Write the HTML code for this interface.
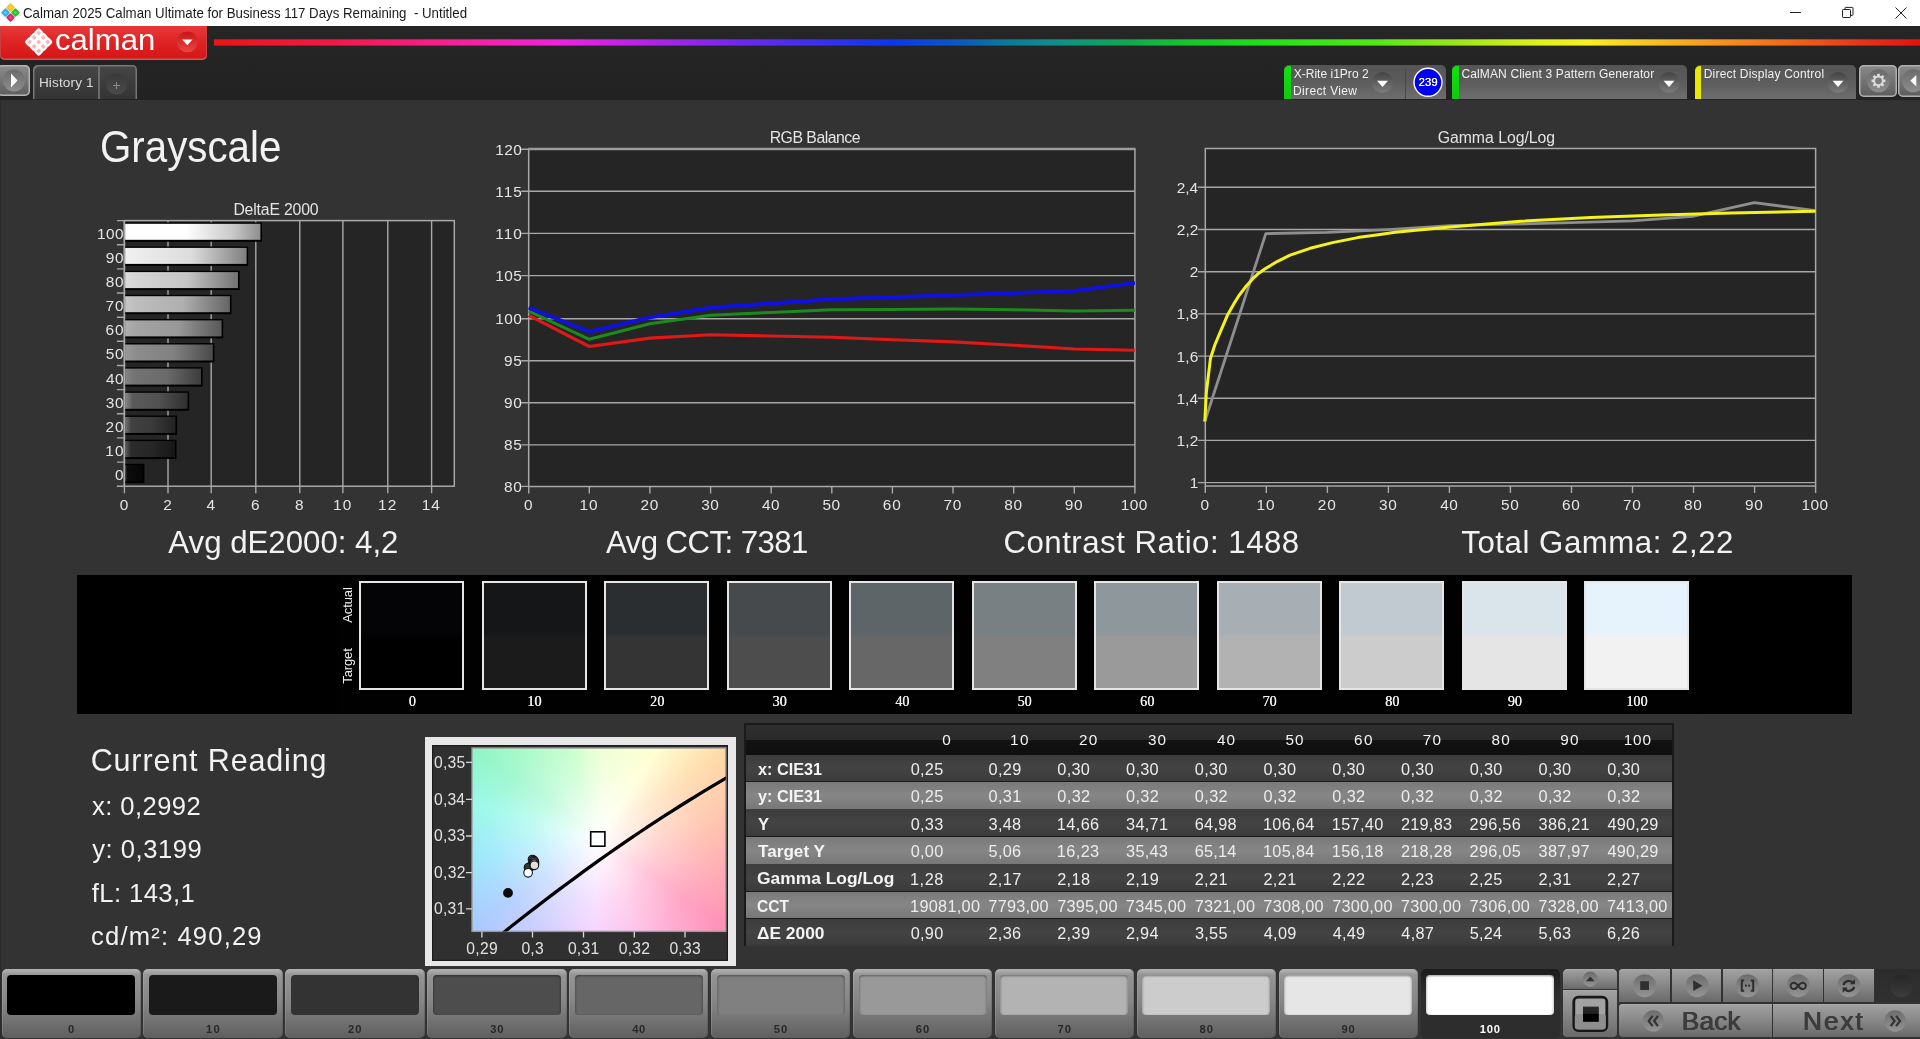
<!DOCTYPE html>
<html><head><meta charset="utf-8"><title>Calman</title>
<style>
html,body{margin:0;padding:0;}
body{width:1920px;height:1039px;overflow:hidden;background:#333;font-family:"Liberation Sans",sans-serif;position:relative;}
.t{position:absolute;white-space:pre;line-height:1;font-family:"Liberation Sans",sans-serif;}
.a{position:absolute;}
svg{position:absolute;left:0;top:0;overflow:visible;}
</style></head><body>

<div class="a" style="left:0;top:0;width:1920px;height:26px;background:#fff;"></div>
<svg width="1920" height="26" viewBox="0 0 1920 26">
<g transform="translate(10.5,12.6)">
<rect x="-3.3" y="-3.3" width="6.6" height="6.6" rx="1.1" transform="translate(0,-4.95) rotate(45)" fill="#f6c722"/>
<rect x="-3.3" y="-3.3" width="6.6" height="6.6" rx="1.1" transform="translate(-4.95,0) rotate(45)" fill="#37aee8"/>
<rect x="-3.3" y="-3.3" width="6.6" height="6.6" rx="1.1" transform="translate(4.95,0) rotate(45)" fill="#2cc42c"/>
<rect x="-3.3" y="-3.3" width="6.6" height="6.6" rx="1.1" transform="translate(0,4.95) rotate(45)" fill="#e0286a"/>
<rect x="-1.2" y="-1.2" width="2.4" height="2.4" transform="translate(0,-4.95) rotate(45)" fill="#ffd83a"/>
<rect x="-1.2" y="-1.2" width="2.4" height="2.4" transform="translate(-4.95,0) rotate(45)" fill="#5cd0f8"/>
<rect x="-1.2" y="-1.2" width="2.4" height="2.4" transform="translate(4.95,0) rotate(45)" fill="#40e840"/>
<rect x="-1.2" y="-1.2" width="2.4" height="2.4" transform="translate(0,4.95) rotate(45)" fill="#f84888"/>
</g>
<g stroke="#222" stroke-width="1" fill="none">
<path d="M1790 12.5h11"/>
<rect x="1842.5" y="9.5" width="8" height="8" rx=".7"/>
<path d="M1845 9.5v-1.5q0-.6 .6-.6h6.800q.6 0 .6 .6v6.800q0 .6-.6 .6h-1.500"/>
<path d="M1895.5 7.5l11 11M1906.5 7.5l-11 11"/>
</g></svg>
<div class="a" style="left:0;top:26px;width:1920px;height:73.5px;background:linear-gradient(#262626,#222);"></div><div class="a" style="left:0;top:99.500px;width:1px;height:940px;background:#2a2a2a;"></div>
<div class="a" style="left:0;top:26px;width:206.5px;height:33.6px;border-radius:0 0 5px 5px;background:linear-gradient(#e8393a 0%,#e02425 45%,#d41516 100%);box-shadow:inset 0 -1.5px 0 #c9585a, inset -1px 0 0 #c94042, inset 1px 0 0 #c94042;"></div>
<svg width="1920" height="60" viewBox="0 0 1920 60"><defs><linearGradient id="rbw" x1="214" x2="1920" y1="0" y2="0" gradientUnits="userSpaceOnUse"><stop offset="0.0000" stop-color="#ec1414"/><stop offset="0.0703" stop-color="#f41848"/><stop offset="0.1495" stop-color="#f820a0"/><stop offset="0.2016" stop-color="#f220e0"/><stop offset="0.2544" stop-color="#b422ea"/><stop offset="0.3066" stop-color="#7228f0"/><stop offset="0.3593" stop-color="#3430f0"/><stop offset="0.3986" stop-color="#0a38f0"/><stop offset="0.4379" stop-color="#0a5ac0"/><stop offset="0.4642" stop-color="#0a7a9a"/><stop offset="0.4959" stop-color="#109088"/><stop offset="0.5352" stop-color="#10a850"/><stop offset="0.5744" stop-color="#18c828"/><stop offset="0.6137" stop-color="#20e018"/><stop offset="0.6794" stop-color="#50e818"/><stop offset="0.7321" stop-color="#a0e818"/><stop offset="0.7714" stop-color="#d8f018"/><stop offset="0.8054" stop-color="#f8f020"/><stop offset="0.8370" stop-color="#f8c820"/><stop offset="0.8763" stop-color="#f89820"/><stop offset="0.9291" stop-color="#f06018"/><stop offset="0.9683" stop-color="#e83018"/><stop offset="1.0000" stop-color="#e81010"/></linearGradient></defs><rect x="214" y="39.3" width="1706" height="6.3" fill="url(#rbw)"/></svg>
<svg width="210" height="60" viewBox="0 0 210 60">
<g transform="translate(38.7,42) scale(1.07)" fill="rgba(255,255,255,.68)" stroke="#fff" stroke-width="1.9" stroke-linejoin="round">
<g transform="rotate(45)">
<rect x="-8.6" y="-8.6" width="5.2" height="5.2" rx="1"/><rect x="-2.6" y="-8.6" width="5.2" height="5.2" rx="1"/><rect x="3.4" y="-8.6" width="5.2" height="5.2" rx="1"/>
<rect x="-8.6" y="-2.6" width="5.2" height="5.2" rx="1"/><rect x="-2.6" y="-2.6" width="5.2" height="5.2" rx="1"/><rect x="3.4" y="-2.6" width="5.2" height="5.2" rx="1"/>
<rect x="-8.6" y="3.4" width="5.2" height="5.2" rx="1"/><rect x="-2.6" y="3.4" width="5.2" height="5.2" rx="1"/><rect x="3.4" y="3.4" width="5.2" height="5.2" rx="1"/>
</g></g>
<circle cx="187.3" cy="41.8" r="10.4" fill="url(#rb)"/>
<path d="M182.1 39.6h10.4l-5.2 5.6z" fill="#fff"/>
<defs><linearGradient id="rb" x1="0" y1="0" x2="0" y2="1"><stop offset="0" stop-color="#c81416" stop-opacity="1"/><stop offset="1" stop-color="#e84646" stop-opacity="1"/></linearGradient></defs>
</svg>
<div class="a" style="left:-3px;top:65px;width:33px;height:31px;border-radius:5px;background:linear-gradient(#8c8c8c,#5e5e5e);box-shadow:inset 0 0 0 1.5px #b4b4b4;"></div>
<svg width="40" height="100" viewBox="0 0 40 100"><circle cx="14" cy="80.5" r="11" fill="url(#pg)"/><path d="M11 73.5l6.5 7l-6.5 7z" fill="#fff"/>
<defs><linearGradient id="pg" x1="0" y1="0" x2="0" y2="1"><stop offset="0" stop-color="#6a6a6a"/><stop offset="1" stop-color="#8e8e8e"/></linearGradient></defs></svg>
<div class="a" style="left:33px;top:65px;width:104px;height:34px;border-radius:5px 5px 0 0;background:linear-gradient(#464646,#343434);box-shadow:inset 1.5px 1.5px 0 #777, inset -1.5px 0 0 #777;"></div>
<div class="a" style="left:98px;top:66px;width:1.5px;height:33px;background:#6c6c6c;"></div>
<svg width="140" height="100" viewBox="0 0 140 100"><circle cx="116.5" cy="84" r="10.5" fill="url(#hg)"/><path d="M113 85.5h7M116.5 82v7" stroke="#888" stroke-width="1" fill="none"/>
<defs><linearGradient id="hg" x1="0" y1="0" x2="0" y2="1"><stop offset="0" stop-color="#3a3a3a"/><stop offset="1" stop-color="#4a4a4a"/></linearGradient></defs></svg>
<svg width="0" height="0"><defs><linearGradient id="dg" x1="0" y1="0" x2="0" y2="1"><stop offset="0" stop-color="#444"/><stop offset="1" stop-color="#7c7c7c"/></linearGradient></defs></svg>
<div class="a" style="left:1284px;top:65px;width:161.5px;height:34px;border-radius:5px 5px 0 0;background:linear-gradient(#555 0%,#5c5c5c 50%,#6e6e6e 100%);"></div>
<div class="a" style="left:1284px;top:65.5px;width:6.9px;height:33.5px;border-radius:5px 0 0 0;background:linear-gradient(#0ee40e,#12c812);"></div>
<div class="a" style="left:1404.5px;top:69px;width:1.5px;height:30px;background:#484848;"></div>
<svg width="1920" height="100" viewBox="0 0 1920 100"><circle cx="1382.5" cy="82.5" r="10.5" fill="url(#dg)"/><path d="M1377 80.7h11l-5.5 6.200z" fill="#fff"/></svg>
<svg width="1920" height="100" viewBox="0 0 1920 100"><circle cx="1428" cy="82.3" r="14" fill="#0000f0" stroke="#fff" stroke-width="1.4"/></svg>
<div class="a" style="left:1452px;top:65px;width:235px;height:34px;border-radius:5px 5px 0 0;background:linear-gradient(#555 0%,#5c5c5c 50%,#6e6e6e 100%);"></div>
<div class="a" style="left:1452px;top:65.5px;width:6.9px;height:33.5px;border-radius:5px 0 0 0;background:linear-gradient(#0ee40e,#12c812);"></div>
<svg width="1920" height="100" viewBox="0 0 1920 100"><circle cx="1669" cy="82.5" r="10.5" fill="url(#dg)"/><path d="M1663.5 80.7h11l-5.5 6.200z" fill="#fff"/></svg>
<div class="a" style="left:1694.5px;top:65px;width:161.5px;height:34px;border-radius:5px 5px 0 0;background:linear-gradient(#555 0%,#5c5c5c 50%,#6e6e6e 100%);"></div>
<div class="a" style="left:1694.5px;top:65.5px;width:6.9px;height:33.5px;border-radius:5px 0 0 0;background:#e8e800;"></div>
<svg width="1920" height="100" viewBox="0 0 1920 100"><circle cx="1838" cy="82.5" r="10.5" fill="url(#dg)"/><path d="M1832.5 80.7h11l-5.5 6.200z" fill="#fff"/></svg>
<div class="a" style="left:1859.4px;top:65px;width:37.6px;height:31.5px;border-radius:5px;background:linear-gradient(#8a8a8a,#5c5c5c);box-shadow:inset 0 0 0 1.5px #b0b0b0;"></div>
<div class="a" style="left:1898px;top:65px;width:30px;height:31.5px;border-radius:5px;background:linear-gradient(#8a8a8a,#5c5c5c);box-shadow:inset 0 0 0 1.5px #b0b0b0;"></div>
<svg width="1920" height="100" viewBox="0 0 1920 100"><circle cx="1878.5" cy="80.8" r="11.5" fill="url(#pg)"/><path d="M1883.61 79.39L1885.50 79.60L1885.50 82.00L1883.61 82.21L1883.11 83.41L1884.30 84.90L1882.60 86.60L1881.11 85.41L1879.91 85.91L1879.70 87.80L1877.30 87.80L1877.09 85.91L1875.89 85.41L1874.40 86.60L1872.70 84.90L1873.89 83.41L1873.39 82.21L1871.50 82.00L1871.50 79.60L1873.39 79.39L1873.89 78.19L1872.70 76.70L1874.40 75.00L1875.89 76.19L1877.09 75.69L1877.30 73.80L1879.70 73.80L1879.91 75.69L1881.11 76.19L1882.60 75.00L1884.30 76.70L1883.11 78.19Z" fill="#dcdcdc"/><circle cx="1878.5" cy="80.800" r="3.400" fill="#7c7c7c"/><circle cx="1913.5" cy="80.8" r="11.5" fill="url(#pg)"/><path d="M1916.3 75l-6 5.700l6 5.700z" fill="#fff"/></svg>
<svg width="1920" height="1039" viewBox="0 0 1920 1039">
<defs>
<linearGradient id="b0"><stop offset="0" stop-color="#fff"/><stop offset=".45" stop-color="#fff"/><stop offset=".8" stop-color="#c8c8c8"/><stop offset="1" stop-color="#8e8e8e"/></linearGradient>
<linearGradient id="b1"><stop offset="0" stop-color="#f1f1f1"/><stop offset=".12" stop-color="#ececec"/><stop offset=".55" stop-color="#dcdcdc"/><stop offset="1" stop-color="#7f7f7f"/></linearGradient>
<linearGradient id="b2"><stop offset="0" stop-color="#dbdbdb"/><stop offset=".12" stop-color="#d4d4d4"/><stop offset=".55" stop-color="#c5c5c5"/><stop offset="1" stop-color="#727272"/></linearGradient>
<linearGradient id="b3"><stop offset="0" stop-color="#c6c6c6"/><stop offset=".12" stop-color="#bdbdbd"/><stop offset=".55" stop-color="#afafaf"/><stop offset="1" stop-color="#656565"/></linearGradient>
<linearGradient id="b4"><stop offset="0" stop-color="#afafaf"/><stop offset=".12" stop-color="#a4a4a4"/><stop offset=".55" stop-color="#989898"/><stop offset="1" stop-color="#585858"/></linearGradient>
<linearGradient id="b5"><stop offset="0" stop-color="#999999"/><stop offset=".12" stop-color="#8c8c8c"/><stop offset=".55" stop-color="#818181"/><stop offset="1" stop-color="#4a4a4a"/></linearGradient>
<linearGradient id="b6"><stop offset="0" stop-color="#838383"/><stop offset=".12" stop-color="#747474"/><stop offset=".55" stop-color="#6a6a6a"/><stop offset="1" stop-color="#3d3d3d"/></linearGradient>
<linearGradient id="b7"><stop offset="0" stop-color="#898989"/><stop offset=".12" stop-color="#5a5a5a"/><stop offset=".55" stop-color="#515151"/><stop offset="1" stop-color="#2f2f2f"/></linearGradient>
<linearGradient id="b8"><stop offset="0" stop-color="#737373"/><stop offset=".12" stop-color="#424242"/><stop offset=".55" stop-color="#3a3a3a"/><stop offset="1" stop-color="#222222"/></linearGradient>
<linearGradient id="b9"><stop offset="0" stop-color="#5e5e5e"/><stop offset=".12" stop-color="#2c2c2c"/><stop offset=".55" stop-color="#262626"/><stop offset="1" stop-color="#161616"/></linearGradient>
<linearGradient id="b10"><stop offset="0" stop-color="#434343"/><stop offset=".12" stop-color="#0e0e0e"/><stop offset=".55" stop-color="#090909"/><stop offset="1" stop-color="#050505"/></linearGradient>
</defs>
<rect x="124.4" y="220.6" width="329.9" height="265.6" fill="#252525"/>
<path d="M168.0 220.6V493.2M211.2 220.6V493.2M255.8 220.6V493.2M299.8 220.6V493.2M342.9 220.6V493.2M387.8 220.6V493.2M431.6 220.6V493.2M124.4 486.2V493.2M116.9 220.6H124.4M116.9 244.7H124.4M116.9 268.9H124.4M116.9 293.0H124.4M116.9 317.2H124.4M116.9 341.3H124.4M116.9 365.5H124.4M116.9 389.6H124.4M116.9 413.8H124.4M116.9 437.9H124.4M116.9 462.1H124.4M116.9 486.2H124.4" stroke="#a8a8a8" stroke-width="1.4" fill="none"/>
<rect x="124.4" y="220.6" width="329.9" height="265.6" fill="none" stroke="#a8a8a8" stroke-width="1.5"/>
<rect x="125.1" y="222.4" width="136.9" height="19.4" fill="#000"/>
<rect x="125.1" y="223.8" width="135.3" height="16" fill="url(#b0)"/>
<rect x="125.1" y="246.5" width="123.1" height="19.4" fill="#000"/>
<rect x="125.1" y="247.9" width="121.5" height="16" fill="url(#b1)"/>
<rect x="125.1" y="270.7" width="114.5" height="19.4" fill="#000"/>
<rect x="125.1" y="272.1" width="112.9" height="16" fill="url(#b2)"/>
<rect x="125.1" y="294.8" width="106.4" height="19.4" fill="#000"/>
<rect x="125.1" y="296.2" width="104.8" height="16" fill="url(#b3)"/>
<rect x="125.1" y="319.0" width="98.1" height="19.4" fill="#000"/>
<rect x="125.1" y="320.4" width="96.5" height="16" fill="url(#b4)"/>
<rect x="125.1" y="343.1" width="89.3" height="19.4" fill="#000"/>
<rect x="125.1" y="344.5" width="87.7" height="16" fill="url(#b5)"/>
<rect x="125.1" y="367.2" width="77.5" height="19.4" fill="#000"/>
<rect x="125.1" y="368.6" width="75.9" height="16" fill="url(#b6)"/>
<rect x="125.1" y="391.4" width="64.1" height="19.4" fill="#000"/>
<rect x="125.1" y="392.8" width="62.5" height="16" fill="url(#b7)"/>
<rect x="125.1" y="415.5" width="52.0" height="19.4" fill="#000"/>
<rect x="125.1" y="416.9" width="50.4" height="16" fill="url(#b8)"/>
<rect x="125.1" y="439.7" width="51.4" height="19.4" fill="#000"/>
<rect x="125.1" y="441.1" width="49.8" height="16" fill="url(#b9)"/>
<rect x="125.1" y="463.8" width="19.3" height="19.4" fill="#000"/>
<rect x="125.1" y="465.2" width="17.7" height="16" fill="url(#b10)"/>
<path d="M124.4 220.6V486.2" stroke="#a8a8a8" stroke-width="1.5" fill="none"/>
<rect x="528.7" y="149.3" width="606.2" height="337.1" fill="#252525"/>
<path d="M521.2 149.3H528.7M521.2 191.3H1134.9M521.2 233.4H1134.9M521.2 275.6H1134.9M521.2 318.7H1134.9M521.2 360.8H1134.9M521.2 402.7H1134.9M521.2 444.9H1134.9M521.2 486.4H528.7M528.7 486.4V493.4M589.3 486.4V493.4M649.9 486.4V493.4M710.6 486.4V493.4M771.2 486.4V493.4M831.8 486.4V493.4M892.4 486.4V493.4M953.0 486.4V493.4M1013.7 486.4V493.4M1074.3 486.4V493.4M1134.9 486.4V493.4" stroke="#a8a8a8" stroke-width="1.4" fill="none"/>
<path d="M528.7 149.3V486.4H1134.9V149.3" fill="none" stroke="#a8a8a8" stroke-width="1.5"/>
<path d="M528 149H1135.6" fill="none" stroke="#9c9c9c" stroke-width="2.6"/>
<polyline points="528.7,315.3 589.3,346.5 649.9,338.1 710.6,334.7 771.2,336.0 831.8,337.2 892.4,339.8 953.0,341.9 1013.7,345.2 1074.3,349.0 1134.9,350.3" fill="none" stroke="#e01818" stroke-width="3.1" stroke-linejoin="round"/>
<polyline points="528.7,311.1 589.3,339.3 649.9,323.7 710.6,315.3 771.2,312.4 831.8,309.8 892.4,309.4 953.0,309.0 1013.7,309.8 1074.3,311.1 1134.9,310.3" fill="none" stroke="#1c8a1c" stroke-width="3" stroke-linejoin="round"/>
<polyline points="528.7,307.7 589.3,331.8 649.9,317.4 710.6,307.7 771.2,303.5 831.8,299.3 892.4,297.2 953.0,295.1 1013.7,293.0 1074.3,290.9 1134.9,282.9" fill="none" stroke="#1010e0" stroke-width="3.9" stroke-linejoin="round"/>
<rect x="1205.3" y="148.5" width="610.3" height="337.5" fill="#252525"/>
<path d="M1197.8 482.6H1815.6M1197.8 440.4H1815.6M1197.8 398.2H1815.6M1197.8 356.1H1815.6M1197.8 313.9H1815.6M1197.8 271.7H1815.6M1197.8 229.5H1815.6M1197.8 187.3H1815.6M1205.3 486.0V493.0M1266.3 486.0V493.0M1327.4 486.0V493.0M1388.4 486.0V493.0M1449.4 486.0V493.0M1510.4 486.0V493.0M1571.5 486.0V493.0M1632.5 486.0V493.0M1693.5 486.0V493.0M1754.6 486.0V493.0M1815.6 486.0V493.0" stroke="#a8a8a8" stroke-width="1.4" fill="none"/>
<rect x="1205.3" y="148.5" width="610.3" height="337.5" fill="none" stroke="#a8a8a8" stroke-width="1.5"/>
<polyline points="1204.8,421.5 1265.8,233.6 1327.3,232.4 1388.3,229.6 1450.3,225.7 1510.4,224.2 1571.4,222.6 1632.4,220.8 1692.5,216.3 1754.3,202.7 1815.6,210.6" fill="none" stroke="#8e8e8e" stroke-width="2.8" stroke-linejoin="round"/>
<polyline points="1204.8,421.5 1206.3,392.7 1210.5,358.2 1215.0,344.5 1220.0,332.7 1227.5,315.1 1233.8,303.9 1239.0,295.5 1245.0,287.6 1252.6,278.9 1258.5,273.4 1265.1,268.8 1277.6,261.3 1290.1,255.1 1310.1,248.3 1332.6,242.6 1357.7,237.6 1380.0,234.4 1395.2,232.3 1450.3,226.9 1520.6,221.3 1590.9,217.6 1661.2,215.0 1731.5,212.9 1815.6,211.2" fill="none" stroke="#f4f41a" stroke-width="3" stroke-linejoin="round"/>
</svg>
<div class="a" style="left:77px;top:575px;width:1774.5px;height:139px;background:#000;"></div>
<div class="a" style="left:338px;top:575px;width:1360px;height:139px;background:#010101;"></div>
<div class="a" style="left:359.0px;top:581.2px;width:101.2px;height:105.2px;border:2px solid #e6e6e6;background:linear-gradient(#040406 0,#040406 48.5%,#000000 51.5%,#000000 100%);"></div>
<div class="a" style="left:481.5px;top:581.2px;width:101.2px;height:105.2px;border:2px solid #e6e6e6;background:linear-gradient(#151618 0,#151618 48.5%,#1b1b1b 51.5%,#1b1b1b 100%);"></div>
<div class="a" style="left:604.0px;top:581.2px;width:101.2px;height:105.2px;border:2px solid #e6e6e6;background:linear-gradient(#2b2e31 0,#2b2e31 48.5%,#343434 51.5%,#343434 100%);"></div>
<div class="a" style="left:726.5px;top:581.2px;width:101.2px;height:105.2px;border:2px solid #e6e6e6;background:linear-gradient(#464a4d 0,#464a4d 48.5%,#4d4d4d 51.5%,#4d4d4d 100%);"></div>
<div class="a" style="left:849.0px;top:581.2px;width:101.2px;height:105.2px;border:2px solid #e6e6e6;background:linear-gradient(#5e6569 0,#5e6569 48.5%,#676767 51.5%,#676767 100%);"></div>
<div class="a" style="left:971.5px;top:581.2px;width:101.2px;height:105.2px;border:2px solid #e6e6e6;background:linear-gradient(#788083 0,#788083 48.5%,#808080 51.5%,#808080 100%);"></div>
<div class="a" style="left:1094.0px;top:581.2px;width:101.2px;height:105.2px;border:2px solid #e6e6e6;background:linear-gradient(#8e979c 0,#8e979c 48.5%,#9a9a9a 51.5%,#9a9a9a 100%);"></div>
<div class="a" style="left:1216.5px;top:581.2px;width:101.2px;height:105.2px;border:2px solid #e6e6e6;background:linear-gradient(#a7afb4 0,#a7afb4 48.5%,#b2b2b2 51.5%,#b2b2b2 100%);"></div>
<div class="a" style="left:1339.0px;top:581.2px;width:101.2px;height:105.2px;border:2px solid #e6e6e6;background:linear-gradient(#c0cad0 0,#c0cad0 48.5%,#cccccc 51.5%,#cccccc 100%);"></div>
<div class="a" style="left:1461.5px;top:581.2px;width:101.2px;height:105.2px;border:2px solid #e6e6e6;background:linear-gradient(#d9e4eb 0,#d9e4eb 48.5%,#e5e5e5 51.5%,#e5e5e5 100%);"></div>
<div class="a" style="left:1584.0px;top:581.2px;width:101.2px;height:105.2px;border:2px solid #e6e6e6;background:linear-gradient(#e7f3fc 0,#e7f3fc 48.5%,#f2f2f2 51.5%,#f2f2f2 100%);"></div>
<div class="a" style="left:424.9px;top:737px;width:311.1px;height:229.1px;background:#e8e8e8;"></div>
<div class="a" style="left:432.2px;top:744.5px;width:296.3px;height:216.7px;background:#303030;box-shadow:inset 0 0 0 1.2px #1c1c1c;"></div>
<div class="a" style="left:472px;top:748px;width:253.8px;height:183.4px;overflow:hidden;background:conic-gradient(from 0deg at 125.4px 90px,#e4ffc4 0deg,#ffffc6 34deg,#ffd9a6 56deg,#ffb4a4 90deg,#ff8fb6 125deg,#ffb0e0 155deg,#f2c6ff 182deg,#c6c4ff 212deg,#a6c8ff 234deg,#8fe6fb 262deg,#8ff8e6 285deg,#8cf5c4 306deg,#b4ffba 344deg,#e4ffc4 360deg);"><div style="position:absolute;left:-80px;top:-120px;width:411px;height:420px;background:radial-gradient(circle closest-side at 205.4px 210px,rgba(255,255,255,1) 0,rgba(255,255,255,.8) 12%,rgba(255,255,255,.46) 31%,rgba(255,255,255,.18) 52%,rgba(255,255,255,0) 76%);"></div></div>
<svg width="1920" height="1039" viewBox="0 0 1920 1039">
<rect x="472" y="748" width="253.8" height="183.4" fill="none" stroke="#9a9a9a" stroke-width="1.4"/>
<path d="M466.0 762.3H472.0M466.0 799.3H472.0M466.0 836.0H472.0M466.0 872.6H472.0M466.0 908.8H472.0M481.9 931.4V937.4M532.5 931.4V937.4M583.5 931.4V937.4M634.3 931.4V937.4M685.0 931.4V937.4" stroke="#d8d8d8" stroke-width="1.3" fill="none"/>
<clipPath id="cc"><rect x="472" y="748" width="253.8" height="183.4"/></clipPath>
<polyline points="496.0,938.6 504.0,932.2 512.0,925.8 520.0,919.5 528.0,913.2 536.0,907.1 544.0,901.0 552.0,894.9 560.0,888.9 568.0,883.0 576.0,877.1 584.0,871.2 592.0,865.4 600.0,859.7 608.0,854.0 616.0,848.4 624.0,842.9 632.0,837.4 640.0,832.0 648.0,826.7 656.0,821.4 664.0,816.2 672.0,811.1 680.0,806.0 688.0,801.0 696.0,796.1 704.0,791.2 712.0,786.4 720.0,781.6 728.0,777.0" stroke="#000" stroke-width="3.3" fill="none" clip-path="url(#cc)"/>
<rect x="590.700" y="831.800" width="14.200" height="14.400" fill="#fff" stroke="#000" stroke-width="1.600"/>
<circle cx="508" cy="892.9" r="4.9" fill="#0a0a0a"/>
<circle cx="530.5" cy="866.5" r="4.3" fill="#222" stroke="#111" stroke-width="1.1"/>
<circle cx="528.5" cy="867.5" r="4.3" fill="#333" stroke="#111" stroke-width="1.1"/>
<circle cx="532.5" cy="859.5" r="4.3" fill="#555" stroke="#111" stroke-width="1.1"/>
<circle cx="533.8" cy="860.5" r="4.3" fill="#777" stroke="#111" stroke-width="1.1"/>
<circle cx="534.3" cy="861.8" r="4.3" fill="#999" stroke="#111" stroke-width="1.1"/>
<circle cx="534.5" cy="863" r="4.3" fill="#bbb" stroke="#111" stroke-width="1.1"/>
<circle cx="534.2" cy="864" r="4.3" fill="#ccc" stroke="#111" stroke-width="1.1"/>
<circle cx="534.4" cy="865.3" r="4.3" fill="#dedede" stroke="#111" stroke-width="1.1"/>
<circle cx="528.1" cy="872.8" r="4.3" fill="#fff" stroke="#111" stroke-width="1.1"/>
</svg>
<div class="a" style="left:743.5px;top:722.5px;width:930px;height:223.4px;background:#1a1a1a;"></div>
<div class="a" style="left:745.5px;top:724.5px;width:926.5px;height:30px;background:linear-gradient(#2e2e2e 0,#2a2a2a 49%,#121212 51%,#0e0e0e 100%);"></div>
<div class="a" style="left:745.5px;top:754.50px;width:926.5px;height:26.82px;background:linear-gradient(#3d3d3d,#434343 50%,#3b3b3b);"></div>
<div class="a" style="left:745.5px;top:781.92px;width:926.5px;height:26.82px;background:linear-gradient(#7a7a7a,#868686 50%,#777);"></div>
<div class="a" style="left:745.5px;top:809.34px;width:926.5px;height:26.82px;background:linear-gradient(#3d3d3d,#434343 50%,#3b3b3b);"></div>
<div class="a" style="left:745.5px;top:836.76px;width:926.5px;height:26.82px;background:linear-gradient(#7a7a7a,#868686 50%,#777);"></div>
<div class="a" style="left:745.5px;top:864.18px;width:926.5px;height:26.82px;background:linear-gradient(#3d3d3d,#434343 50%,#3b3b3b);"></div>
<div class="a" style="left:745.5px;top:891.60px;width:926.5px;height:26.82px;background:linear-gradient(#7a7a7a,#868686 50%,#777);"></div>
<div class="a" style="left:745.5px;top:919.02px;width:926.5px;height:26.90px;background:linear-gradient(#3d3d3d,#434343 50%,#3b3b3b);"></div>
<div class="a" style="left:1.5px;top:969px;width:139.4px;height:68.5px;border-radius:5px;background:linear-gradient(#b2b2b2 0,#a8a8a8 2.5px,#949494 6px,#868686 48%,#5f5f5f 100%);box-shadow:inset 1px 0 0 rgba(255,255,255,.12),inset -1px 0 0 rgba(0,0,0,.12);"></div>
<div class="a" style="left:7.1px;top:975px;width:128px;height:40px;border-radius:4px;background:#000000;"></div>
<div class="a" style="left:143.4px;top:969px;width:139.4px;height:68.5px;border-radius:5px;background:linear-gradient(#b2b2b2 0,#a8a8a8 2.5px,#949494 6px,#868686 48%,#5f5f5f 100%);box-shadow:inset 1px 0 0 rgba(255,255,255,.12),inset -1px 0 0 rgba(0,0,0,.12);"></div>
<div class="a" style="left:149.0px;top:975px;width:128px;height:40px;border-radius:4px;background:#1a1a1a;"></div>
<div class="a" style="left:285.3px;top:969px;width:139.4px;height:68.5px;border-radius:5px;background:linear-gradient(#b2b2b2 0,#a8a8a8 2.5px,#949494 6px,#868686 48%,#5f5f5f 100%);box-shadow:inset 1px 0 0 rgba(255,255,255,.12),inset -1px 0 0 rgba(0,0,0,.12);"></div>
<div class="a" style="left:290.9px;top:975px;width:128px;height:40px;border-radius:4px;background:#333333;"></div>
<div class="a" style="left:427.2px;top:969px;width:139.4px;height:68.5px;border-radius:5px;background:linear-gradient(#b2b2b2 0,#a8a8a8 2.5px,#949494 6px,#868686 48%,#5f5f5f 100%);box-shadow:inset 1px 0 0 rgba(255,255,255,.12),inset -1px 0 0 rgba(0,0,0,.12);"></div>
<div class="a" style="left:432.8px;top:975px;width:128px;height:40px;border-radius:4px;background:#4d4d4d;box-shadow:inset 0 1.5px 1.5px rgba(0,0,0,.28),inset 1.5px 0 1.5px rgba(0,0,0,.12),inset -1.5px 0 1.5px rgba(0,0,0,.12);"></div>
<div class="a" style="left:569.1px;top:969px;width:139.4px;height:68.5px;border-radius:5px;background:linear-gradient(#b2b2b2 0,#a8a8a8 2.5px,#949494 6px,#868686 48%,#5f5f5f 100%);box-shadow:inset 1px 0 0 rgba(255,255,255,.12),inset -1px 0 0 rgba(0,0,0,.12);"></div>
<div class="a" style="left:574.7px;top:975px;width:128px;height:40px;border-radius:4px;background:#666666;box-shadow:inset 0 1.5px 1.5px rgba(0,0,0,.28),inset 1.5px 0 1.5px rgba(0,0,0,.12),inset -1.5px 0 1.5px rgba(0,0,0,.12);"></div>
<div class="a" style="left:711.0px;top:969px;width:139.4px;height:68.5px;border-radius:5px;background:linear-gradient(#b2b2b2 0,#a8a8a8 2.5px,#949494 6px,#868686 48%,#5f5f5f 100%);box-shadow:inset 1px 0 0 rgba(255,255,255,.12),inset -1px 0 0 rgba(0,0,0,.12);"></div>
<div class="a" style="left:716.6px;top:975px;width:128px;height:40px;border-radius:4px;background:#808080;box-shadow:inset 0 1.5px 1.5px rgba(0,0,0,.28),inset 1.5px 0 1.5px rgba(0,0,0,.12),inset -1.5px 0 1.5px rgba(0,0,0,.12);"></div>
<div class="a" style="left:852.9px;top:969px;width:139.4px;height:68.5px;border-radius:5px;background:linear-gradient(#b2b2b2 0,#a8a8a8 2.5px,#949494 6px,#868686 48%,#5f5f5f 100%);box-shadow:inset 1px 0 0 rgba(255,255,255,.12),inset -1px 0 0 rgba(0,0,0,.12);"></div>
<div class="a" style="left:858.5px;top:975px;width:128px;height:40px;border-radius:4px;background:#999999;box-shadow:inset 0 1.5px 1.5px rgba(0,0,0,.28),inset 1.5px 0 1.5px rgba(0,0,0,.12),inset -1.5px 0 1.5px rgba(0,0,0,.12);"></div>
<div class="a" style="left:994.8px;top:969px;width:139.4px;height:68.5px;border-radius:5px;background:linear-gradient(#b2b2b2 0,#a8a8a8 2.5px,#949494 6px,#868686 48%,#5f5f5f 100%);box-shadow:inset 1px 0 0 rgba(255,255,255,.12),inset -1px 0 0 rgba(0,0,0,.12);"></div>
<div class="a" style="left:1000.4px;top:975px;width:128px;height:40px;border-radius:4px;background:#b3b3b3;box-shadow:inset 0 1.5px 1.5px rgba(0,0,0,.28),inset 1.5px 0 1.5px rgba(0,0,0,.12),inset -1.5px 0 1.5px rgba(0,0,0,.12);"></div>
<div class="a" style="left:1136.7px;top:969px;width:139.4px;height:68.5px;border-radius:5px;background:linear-gradient(#b2b2b2 0,#a8a8a8 2.5px,#949494 6px,#868686 48%,#5f5f5f 100%);box-shadow:inset 1px 0 0 rgba(255,255,255,.12),inset -1px 0 0 rgba(0,0,0,.12);"></div>
<div class="a" style="left:1142.3px;top:975px;width:128px;height:40px;border-radius:4px;background:#cccccc;box-shadow:inset 0 1.5px 1.5px rgba(0,0,0,.28),inset 1.5px 0 1.5px rgba(0,0,0,.12),inset -1.5px 0 1.5px rgba(0,0,0,.12);"></div>
<div class="a" style="left:1278.6px;top:969px;width:139.4px;height:68.5px;border-radius:5px;background:linear-gradient(#b2b2b2 0,#a8a8a8 2.5px,#949494 6px,#868686 48%,#5f5f5f 100%);box-shadow:inset 1px 0 0 rgba(255,255,255,.12),inset -1px 0 0 rgba(0,0,0,.12);"></div>
<div class="a" style="left:1284.2px;top:975px;width:128px;height:40px;border-radius:4px;background:#e6e6e6;box-shadow:inset 0 1.5px 1.5px rgba(0,0,0,.28),inset 1.5px 0 1.5px rgba(0,0,0,.12),inset -1.5px 0 1.5px rgba(0,0,0,.12);"></div>
<div class="a" style="left:1420.5px;top:969px;width:139.4px;height:69px;border-radius:5px;background:linear-gradient(#1c1c1c,#2e2e2e 40%,#2c2c2c);"></div>
<div class="a" style="left:1426.1px;top:975px;width:128px;height:40px;border-radius:4px;background:#ffffff;box-shadow:inset 0 1.5px 1.5px rgba(0,0,0,.28),inset 1.5px 0 1.5px rgba(0,0,0,.12),inset -1.5px 0 1.5px rgba(0,0,0,.12);"></div>
<div class="a" style="left:1563px;top:969px;width:54px;height:19.6px;border-radius:5px 5px 0 0;background:linear-gradient(#a2a2a2 0,#8c8c8c 42%,#6a6a6a 100%);box-shadow:inset 0 1.2px 0 #a8a8a8;"></div>
<div class="a" style="left:1563px;top:990.4px;width:54px;height:47.1px;border-radius:0 0 4px 4px;background:linear-gradient(#a2a2a2 0,#8c8c8c 42%,#6a6a6a 100%);box-shadow:inset 0 1.2px 0 #a8a8a8;"></div>
<div class="a" style="left:1619px;top:969px;width:51.4px;height:33px;border-radius:4px 0 0 0;background:linear-gradient(#a2a2a2 0,#8c8c8c 42%,#6a6a6a 100%);box-shadow:inset 0 1.2px 0 #a8a8a8;"></div>
<div class="a" style="left:1671.6px;top:969px;width:49.8px;height:33px;border-radius:0;background:linear-gradient(#a2a2a2 0,#8c8c8c 42%,#6a6a6a 100%);box-shadow:inset 0 1.2px 0 #a8a8a8;"></div>
<div class="a" style="left:1722.6px;top:969px;width:49.4px;height:33px;border-radius:0;background:linear-gradient(#a2a2a2 0,#8c8c8c 42%,#6a6a6a 100%);box-shadow:inset 0 1.2px 0 #a8a8a8;"></div>
<div class="a" style="left:1773.2px;top:969px;width:49.5px;height:33px;border-radius:0;background:linear-gradient(#a2a2a2 0,#8c8c8c 42%,#6a6a6a 100%);box-shadow:inset 0 1.2px 0 #a8a8a8;"></div>
<div class="a" style="left:1823.9px;top:969px;width:50.1px;height:33px;border-radius:0;background:linear-gradient(#a2a2a2 0,#8c8c8c 42%,#6a6a6a 100%);box-shadow:inset 0 1.2px 0 #a8a8a8;"></div>
<div class="a" style="left:1875px;top:969px;width:45px;height:33px;background:linear-gradient(#2c2c2c,#303030);"></div>
<div class="a" style="left:1619px;top:1003.8px;width:153.2px;height:33.7px;border-radius:4px 0 0 4px;background:linear-gradient(#a2a2a2 0,#8c8c8c 42%,#6a6a6a 100%);box-shadow:inset 0 1.2px 0 #a8a8a8;"></div>
<div class="a" style="left:1773.2px;top:1003.8px;width:150px;height:33.7px;border-radius:0;background:linear-gradient(#a2a2a2 0,#8c8c8c 42%,#6a6a6a 100%);box-shadow:inset 0 1.2px 0 #a8a8a8;"></div>
<svg width="1920" height="1039" viewBox="0 0 1920 1039"><defs><linearGradient id="cg" x1="0" y1="0" x2="0" y2="1"><stop offset="0" stop-color="#6c6c6c"/><stop offset="1" stop-color="#949494"/></linearGradient><linearGradient id="sq" x1="0" y1="0" x2="0" y2="1"><stop offset="0" stop-color="#2c2c2c"/><stop offset=".48" stop-color="#1c1c1c"/><stop offset=".5" stop-color="#000"/><stop offset="1" stop-color="#000"/></linearGradient><linearGradient id="cg2" x1="0" y1="0" x2="0" y2="1"><stop offset="0" stop-color="#262626"/><stop offset="1" stop-color="#3c3c3c"/></linearGradient></defs>
<circle cx="1644.6" cy="985.7" r="11.5" fill="url(#cg)"/>
<circle cx="1697.1" cy="985.7" r="11.5" fill="url(#cg)"/>
<circle cx="1747.5" cy="985.7" r="11.5" fill="url(#cg)"/>
<circle cx="1798.2" cy="985.7" r="11.5" fill="url(#cg)"/>
<circle cx="1848.8" cy="985.7" r="11.5" fill="url(#cg)"/>
<circle cx="1901.200" cy="985.900" r="11.300" fill="url(#cg2)"/>
<circle cx="1590.3" cy="979.2" r="7.6" fill="url(#cg)"/><path d="M1586 981.2h8.6l-4.3-4.6z" fill="#303030"/>
<rect x="1640.2" y="981.2" width="8.8" height="8.8" fill="#303030"/>
<path d="M1693.2 980.3v10.8l9.4-5.4z" fill="#303030"/>
<path d="M1744.2 980.6h-2.4v10.2h2.4M1750.8 980.6h2.4v10.2h-2.4" stroke="#2e2e2e" stroke-width="2" fill="none"/><circle cx="1745.900" cy="985.700" r="1.100" fill="#2e2e2e"/><circle cx="1749.100" cy="985.700" r="1.100" fill="#2e2e2e"/>
<path d="M1798.2 985.9c-1.500-2.200-2.800-3.200-4.400-3.200a3.200 3.200 0 0 0 0 6.400c1.600 0 2.900-1 4.400-3.200c1.500-2.200 2.800-3.200 4.400-3.200a3.200 3.200 0 0 1 0 6.400c-1.600 0-2.900-1-4.400-3.200z" stroke="#2e2e2e" stroke-width="2" fill="none"/>
<g transform="translate(1848.8,985.9) scale(.86) translate(-1848.8,-985.7)"><path d="M1842.6 984.6a6.4 6.4 0 0 1 10.6-3" stroke="#2e2e2e" stroke-width="2.700" fill="none"/><path d="M1855 986.8a6.4 6.4 0 0 1-10.600 3" stroke="#2e2e2e" stroke-width="2.700" fill="none"/><path d="M1856 977.800v6h-6z" fill="#2e2e2e"/><path d="M1841.600 993.600v-6h6z" fill="#2e2e2e"/></g>
<rect x="1573.8" y="997.2" width="33" height="33.4" rx="4.5" fill="#a2a2a2" stroke="#181818" stroke-width="2.800"/>
<rect x="1574.8" y="1014" width="31" height="15.6" rx="3" fill="#8e8e8e"/>
<rect x="1583" y="1006.600" width="15.800" height="15.200" fill="url(#sq)"/>
<circle cx="1653.3" cy="1021" r="10.700" fill="url(#cg)"/><circle cx="1895.1" cy="1021" r="10.700" fill="url(#cg)"/>
<path d="M1652.600 1015.800l-3.900 5.200l3.900 5.200M1658 1015.800l-3.900 5.200l3.900 5.200" stroke="#343434" stroke-width="2.200" fill="none"/>
<path d="M1890.700 1015.800l3.900 5.200l-3.900 5.200M1896.100 1015.800l3.900 5.200l-3.900 5.200" stroke="#343434" stroke-width="2.200" fill="none"/>
</svg>
<div style="position:absolute;left:0;top:0;width:1920px;height:1039px;will-change:transform;">
<div class="t" style="left:23.43px;top:5.90px;font-size:14.30px;transform:scaleX(0.9287);transform-origin:0 0;color:#1a1a1a;">Calman 2025 Calman Ultimate for Business 117 Days Remaining  - Untitled</div>
<div class="t" style="left:54.78px;top:24.61px;font-size:29.40px;transform:scaleX(1.0576);transform-origin:0 0;color:#fff;">calman</div>
<div class="t" style="left:38.88px;top:76.49px;font-size:13.60px;letter-spacing:0.140px;color:#dcdcdc;">History 1</div>
<div class="t" style="left:1418.43px;top:76.83px;font-size:11.30px;letter-spacing:0.125px;color:#fff;text-shadow:.3px 0 0 #fff;">239</div>
<div class="t" style="left:1293.73px;top:68.34px;font-size:12.00px;letter-spacing:0.013px;color:#f0f0f0;">X-Rite i1Pro 2</div>
<div class="t" style="left:1293.02px;top:84.74px;font-size:12.00px;letter-spacing:0.349px;color:#f0f0f0;">Direct View</div>
<div class="t" style="left:1461.39px;top:68.34px;font-size:12.00px;letter-spacing:0.148px;color:#f0f0f0;">CalMAN Client 3 Pattern Generator</div>
<div class="t" style="left:1703.72px;top:68.34px;font-size:12.00px;letter-spacing:0.207px;color:#f0f0f0;">Direct Display Control</div>
<div class="t" style="left:100.47px;top:124.75px;font-size:44.60px;transform:scaleX(0.9031);transform-origin:0 0;color:#f2f2f2;">Grayscale</div>
<div class="t" style="left:233.40px;top:202.23px;font-size:15.80px;letter-spacing:-0.175px;color:#e4e4e4;">DeltaE 2000</div>
<div class="t" style="left:769.70px;top:130.43px;font-size:15.80px;letter-spacing:-0.493px;color:#e4e4e4;">RGB Balance</div>
<div class="t" style="left:1437.71px;top:130.43px;font-size:15.80px;letter-spacing:-0.023px;color:#e4e4e4;">Gamma Log/Log</div>
<div class="t" style="left:96.92px;top:225.64px;font-size:15.40px;letter-spacing:0.445px;color:#e4e4e4;">100</div>
<div class="t" style="left:105.64px;top:249.78px;font-size:15.40px;letter-spacing:0.733px;color:#e4e4e4;">90</div>
<div class="t" style="left:105.69px;top:273.93px;font-size:15.40px;letter-spacing:0.681px;color:#e4e4e4;">80</div>
<div class="t" style="left:105.57px;top:298.07px;font-size:15.40px;letter-spacing:0.801px;color:#e4e4e4;">70</div>
<div class="t" style="left:105.58px;top:322.22px;font-size:15.40px;letter-spacing:0.793px;color:#e4e4e4;">60</div>
<div class="t" style="left:105.74px;top:346.36px;font-size:15.40px;letter-spacing:0.628px;color:#e4e4e4;">50</div>
<div class="t" style="left:106.01px;top:370.51px;font-size:15.40px;letter-spacing:0.365px;color:#e4e4e4;">40</div>
<div class="t" style="left:105.77px;top:394.65px;font-size:15.40px;letter-spacing:0.598px;color:#e4e4e4;">30</div>
<div class="t" style="left:105.59px;top:418.80px;font-size:15.40px;letter-spacing:0.786px;color:#e4e4e4;">20</div>
<div class="t" style="left:105.19px;top:442.95px;font-size:15.40px;letter-spacing:1.185px;color:#e4e4e4;">10</div>
<div class="t" style="left:114.94px;top:467.09px;font-size:15.40px;color:#e4e4e4;">0</div>
<div class="t" style="left:119.72px;top:496.56px;font-size:15.40px;color:#e4e4e4;">0</div>
<div class="t" style="left:163.32px;top:496.56px;font-size:15.40px;color:#e4e4e4;">2</div>
<div class="t" style="left:206.57px;top:496.56px;font-size:15.40px;color:#e4e4e4;">4</div>
<div class="t" style="left:251.06px;top:496.56px;font-size:15.40px;color:#e4e4e4;">6</div>
<div class="t" style="left:295.12px;top:496.56px;font-size:15.40px;color:#e4e4e4;">8</div>
<div class="t" style="left:333.06px;top:496.56px;font-size:15.40px;letter-spacing:1.185px;color:#e4e4e4;">10</div>
<div class="t" style="left:377.96px;top:496.56px;font-size:15.40px;letter-spacing:1.357px;color:#e4e4e4;">12</div>
<div class="t" style="left:421.76px;top:496.56px;font-size:15.40px;letter-spacing:1.034px;color:#e4e4e4;">14</div>
<div class="t" style="left:495.32px;top:141.76px;font-size:15.40px;letter-spacing:0.445px;color:#e4e4e4;">120</div>
<div class="t" style="left:495.32px;top:183.76px;font-size:15.40px;letter-spacing:1.039px;color:#e4e4e4;">115</div>
<div class="t" style="left:495.32px;top:225.86px;font-size:15.40px;letter-spacing:1.016px;color:#e4e4e4;">110</div>
<div class="t" style="left:495.32px;top:268.06px;font-size:15.40px;letter-spacing:0.467px;color:#e4e4e4;">105</div>
<div class="t" style="left:495.32px;top:311.16px;font-size:15.40px;letter-spacing:0.445px;color:#e4e4e4;">100</div>
<div class="t" style="left:504.04px;top:353.26px;font-size:15.40px;letter-spacing:0.778px;color:#e4e4e4;">95</div>
<div class="t" style="left:504.04px;top:395.16px;font-size:15.40px;letter-spacing:0.733px;color:#e4e4e4;">90</div>
<div class="t" style="left:504.09px;top:437.36px;font-size:15.40px;letter-spacing:0.726px;color:#e4e4e4;">85</div>
<div class="t" style="left:504.09px;top:478.86px;font-size:15.40px;letter-spacing:0.681px;color:#e4e4e4;">80</div>
<div class="t" style="left:523.92px;top:496.56px;font-size:15.40px;color:#e4e4e4;">0</div>
<div class="t" style="left:1200.52px;top:496.56px;font-size:15.40px;color:#e4e4e4;">0</div>
<div class="t" style="left:579.38px;top:496.56px;font-size:15.40px;letter-spacing:1.185px;color:#e4e4e4;">10</div>
<div class="t" style="left:1256.39px;top:496.56px;font-size:15.40px;letter-spacing:1.185px;color:#e4e4e4;">10</div>
<div class="t" style="left:640.40px;top:496.56px;font-size:15.40px;letter-spacing:0.786px;color:#e4e4e4;">20</div>
<div class="t" style="left:1317.82px;top:496.56px;font-size:15.40px;letter-spacing:0.786px;color:#e4e4e4;">20</div>
<div class="t" style="left:701.20px;top:496.56px;font-size:15.40px;letter-spacing:0.598px;color:#e4e4e4;">30</div>
<div class="t" style="left:1379.03px;top:496.56px;font-size:15.40px;letter-spacing:0.598px;color:#e4e4e4;">30</div>
<div class="t" style="left:762.06px;top:496.56px;font-size:15.40px;letter-spacing:0.365px;color:#e4e4e4;">40</div>
<div class="t" style="left:1440.30px;top:496.56px;font-size:15.40px;letter-spacing:0.365px;color:#e4e4e4;">40</div>
<div class="t" style="left:822.41px;top:496.56px;font-size:15.40px;letter-spacing:0.628px;color:#e4e4e4;">50</div>
<div class="t" style="left:1501.06px;top:496.56px;font-size:15.40px;letter-spacing:0.628px;color:#e4e4e4;">50</div>
<div class="t" style="left:882.87px;top:496.56px;font-size:15.40px;letter-spacing:0.793px;color:#e4e4e4;">60</div>
<div class="t" style="left:1561.93px;top:496.56px;font-size:15.40px;letter-spacing:0.793px;color:#e4e4e4;">60</div>
<div class="t" style="left:943.48px;top:496.56px;font-size:15.40px;letter-spacing:0.801px;color:#e4e4e4;">70</div>
<div class="t" style="left:1622.95px;top:496.56px;font-size:15.40px;letter-spacing:0.801px;color:#e4e4e4;">70</div>
<div class="t" style="left:1004.22px;top:496.56px;font-size:15.40px;letter-spacing:0.681px;color:#e4e4e4;">80</div>
<div class="t" style="left:1684.10px;top:496.56px;font-size:15.40px;letter-spacing:0.681px;color:#e4e4e4;">80</div>
<div class="t" style="left:1064.79px;top:496.56px;font-size:15.40px;letter-spacing:0.733px;color:#e4e4e4;">90</div>
<div class="t" style="left:1745.08px;top:496.56px;font-size:15.40px;letter-spacing:0.733px;color:#e4e4e4;">90</div>
<div class="t" style="left:1120.82px;top:496.56px;font-size:15.40px;letter-spacing:0.445px;color:#e4e4e4;">100</div>
<div class="t" style="left:1801.52px;top:496.56px;font-size:15.40px;letter-spacing:0.445px;color:#e4e4e4;">100</div>
<div class="t" style="left:1189.79px;top:475.06px;font-size:15.40px;color:#e4e4e4;">1</div>
<div class="t" style="left:1176.43px;top:432.88px;font-size:15.40px;letter-spacing:0.269px;color:#e4e4e4;">1,2</div>
<div class="t" style="left:1176.43px;top:390.70px;font-size:15.40px;letter-spacing:0.108px;color:#e4e4e4;">1,4</div>
<div class="t" style="left:1176.43px;top:348.52px;font-size:15.40px;letter-spacing:0.220px;color:#e4e4e4;">1,6</div>
<div class="t" style="left:1176.43px;top:306.34px;font-size:15.40px;letter-spacing:0.217px;color:#e4e4e4;">1,8</div>
<div class="t" style="left:1189.81px;top:264.16px;font-size:15.40px;color:#e4e4e4;">2</div>
<div class="t" style="left:1176.83px;top:221.98px;font-size:15.40px;letter-spacing:0.070px;color:#e4e4e4;">2,2</div>
<div class="t" style="left:1176.83px;top:179.80px;font-size:15.40px;letter-spacing:-0.092px;color:#e4e4e4;">2,4</div>
<div class="t" style="left:168.34px;top:527.19px;font-size:31.20px;letter-spacing:0.005px;color:#f2f2f2;">Avg dE2000: 4,2</div>
<div class="t" style="left:605.94px;top:527.19px;font-size:31.20px;letter-spacing:-0.558px;color:#f2f2f2;">Avg CCT: 7381</div>
<div class="t" style="left:1003.42px;top:527.19px;font-size:31.20px;letter-spacing:0.514px;color:#f2f2f2;">Contrast Ratio: 1488</div>
<div class="t" style="left:1461.30px;top:527.19px;font-size:31.20px;letter-spacing:0.542px;color:#f2f2f2;">Total Gamma: 2,22</div>
<div class="t" style="left:408.65px;top:693.91px;font-size:14.20px;font-family:'Liberation Serif',serif;color:#f0f0f0;text-shadow:.3px 0 0 #f0f0f0;">0</div>
<div class="t" style="left:527.25px;top:693.91px;font-size:14.20px;font-family:'Liberation Serif',serif;color:#f0f0f0;text-shadow:.3px 0 0 #f0f0f0;">10</div>
<div class="t" style="left:650.06px;top:693.91px;font-size:14.20px;font-family:'Liberation Serif',serif;color:#f0f0f0;text-shadow:.3px 0 0 #f0f0f0;">20</div>
<div class="t" style="left:772.53px;top:693.91px;font-size:14.20px;font-family:'Liberation Serif',serif;color:#f0f0f0;text-shadow:.3px 0 0 #f0f0f0;">30</div>
<div class="t" style="left:895.23px;top:693.91px;font-size:14.20px;font-family:'Liberation Serif',serif;color:#f0f0f0;text-shadow:.3px 0 0 #f0f0f0;">40</div>
<div class="t" style="left:1017.46px;top:693.91px;font-size:14.20px;font-family:'Liberation Serif',serif;color:#f0f0f0;text-shadow:.3px 0 0 #f0f0f0;">50</div>
<div class="t" style="left:1140.07px;top:693.91px;font-size:14.20px;font-family:'Liberation Serif',serif;color:#f0f0f0;text-shadow:.3px 0 0 #f0f0f0;">60</div>
<div class="t" style="left:1262.40px;top:693.91px;font-size:14.20px;font-family:'Liberation Serif',serif;color:#f0f0f0;text-shadow:.3px 0 0 #f0f0f0;">70</div>
<div class="t" style="left:1385.10px;top:693.91px;font-size:14.20px;font-family:'Liberation Serif',serif;color:#f0f0f0;text-shadow:.3px 0 0 #f0f0f0;">80</div>
<div class="t" style="left:1507.64px;top:693.91px;font-size:14.20px;font-family:'Liberation Serif',serif;color:#f0f0f0;text-shadow:.3px 0 0 #f0f0f0;">90</div>
<div class="t" style="left:1626.20px;top:693.91px;font-size:14.20px;font-family:'Liberation Serif',serif;color:#f0f0f0;text-shadow:.3px 0 0 #f0f0f0;">100</div>
<div class="t" style="left:336px;top:598px;width:22px;height:14px;font-size:13px;color:#f0f0f0;transform:rotate(-90deg);transform-origin:center;text-align:center;letter-spacing:-.1px;"><span style="position:absolute;left:50%;top:50%;transform:translate(-50%,-50%);">Actual</span></div>
<div class="t" style="left:336px;top:659px;width:22px;height:14px;font-size:13px;color:#f0f0f0;transform:rotate(-90deg);transform-origin:center;text-align:center;letter-spacing:-.1px;"><span style="position:absolute;left:50%;top:50%;transform:translate(-50%,-50%);">Target</span></div>
<div class="t" style="left:90.65px;top:744.58px;font-size:30.50px;letter-spacing:0.865px;color:#f2f2f2;">Current Reading</div>
<div class="t" style="left:91.91px;top:794.13px;font-size:25.60px;letter-spacing:0.443px;color:#f2f2f2;">x: 0,2992</div>
<div class="t" style="left:92.14px;top:837.33px;font-size:25.60px;letter-spacing:0.543px;color:#f2f2f2;">y: 0,3199</div>
<div class="t" style="left:91.84px;top:880.73px;font-size:25.60px;letter-spacing:0.409px;color:#f2f2f2;">fL: 143,1</div>
<div class="t" style="left:91.11px;top:923.93px;font-size:25.60px;letter-spacing:1.164px;color:#f2f2f2;">cd/m²: 490,29</div>
<div class="t" style="left:433.99px;top:754.61px;font-size:15.70px;letter-spacing:0.238px;color:#e0e0e0;">0,35</div>
<div class="t" style="left:433.99px;top:791.61px;font-size:15.70px;letter-spacing:0.172px;color:#e0e0e0;">0,34</div>
<div class="t" style="left:433.99px;top:828.31px;font-size:15.70px;letter-spacing:0.248px;color:#e0e0e0;">0,33</div>
<div class="t" style="left:433.99px;top:864.91px;font-size:15.70px;letter-spacing:0.282px;color:#e0e0e0;">0,32</div>
<div class="t" style="left:433.99px;top:901.11px;font-size:15.70px;letter-spacing:0.274px;color:#e0e0e0;">0,31</div>
<div class="t" style="left:466.29px;top:941.31px;font-size:15.70px;letter-spacing:0.266px;color:#e0e0e0;">0,29</div>
<div class="t" style="left:521.39px;top:941.31px;font-size:15.70px;letter-spacing:0.239px;color:#e0e0e0;">0,3</div>
<div class="t" style="left:567.89px;top:941.31px;font-size:15.70px;letter-spacing:0.274px;color:#e0e0e0;">0,31</div>
<div class="t" style="left:618.69px;top:941.31px;font-size:15.70px;letter-spacing:0.282px;color:#e0e0e0;">0,32</div>
<div class="t" style="left:669.39px;top:941.31px;font-size:15.70px;letter-spacing:0.248px;color:#e0e0e0;">0,33</div>
<div class="t" style="left:757.89px;top:760.73px;font-size:16.50px;transform:scaleX(0.9838);transform-origin:0 0;font-weight:bold;color:#f4f4f4;">x: CIE31</div>
<div class="t" style="left:910.66px;top:760.90px;font-size:16.30px;letter-spacing:0.298px;color:#ececec;">0,25</div>
<div class="t" style="left:988.56px;top:760.90px;font-size:16.30px;letter-spacing:0.328px;color:#ececec;">0,29</div>
<div class="t" style="left:1057.36px;top:760.90px;font-size:16.30px;letter-spacing:0.283px;color:#ececec;">0,30</div>
<div class="t" style="left:1126.06px;top:760.90px;font-size:16.30px;letter-spacing:0.283px;color:#ececec;">0,30</div>
<div class="t" style="left:1194.86px;top:760.90px;font-size:16.30px;letter-spacing:0.283px;color:#ececec;">0,30</div>
<div class="t" style="left:1263.56px;top:760.90px;font-size:16.30px;letter-spacing:0.283px;color:#ececec;">0,30</div>
<div class="t" style="left:1332.36px;top:760.90px;font-size:16.30px;letter-spacing:0.283px;color:#ececec;">0,30</div>
<div class="t" style="left:1401.06px;top:760.90px;font-size:16.30px;letter-spacing:0.283px;color:#ececec;">0,30</div>
<div class="t" style="left:1469.76px;top:760.90px;font-size:16.30px;letter-spacing:0.283px;color:#ececec;">0,30</div>
<div class="t" style="left:1538.56px;top:760.90px;font-size:16.30px;letter-spacing:0.283px;color:#ececec;">0,30</div>
<div class="t" style="left:1607.26px;top:760.90px;font-size:16.30px;letter-spacing:0.283px;color:#ececec;">0,30</div>
<div class="t" style="left:757.87px;top:788.15px;font-size:16.50px;transform:scaleX(0.9841);transform-origin:0 0;font-weight:bold;color:#f4f4f4;">y: CIE31</div>
<div class="t" style="left:910.66px;top:788.32px;font-size:16.30px;letter-spacing:0.298px;color:#ececec;">0,25</div>
<div class="t" style="left:988.56px;top:788.32px;font-size:16.30px;letter-spacing:0.336px;color:#ececec;">0,31</div>
<div class="t" style="left:1057.36px;top:788.32px;font-size:16.30px;letter-spacing:0.344px;color:#ececec;">0,32</div>
<div class="t" style="left:1126.06px;top:788.32px;font-size:16.30px;letter-spacing:0.344px;color:#ececec;">0,32</div>
<div class="t" style="left:1194.86px;top:788.32px;font-size:16.30px;letter-spacing:0.344px;color:#ececec;">0,32</div>
<div class="t" style="left:1263.56px;top:788.32px;font-size:16.30px;letter-spacing:0.344px;color:#ececec;">0,32</div>
<div class="t" style="left:1332.36px;top:788.32px;font-size:16.30px;letter-spacing:0.344px;color:#ececec;">0,32</div>
<div class="t" style="left:1401.06px;top:788.32px;font-size:16.30px;letter-spacing:0.344px;color:#ececec;">0,32</div>
<div class="t" style="left:1469.76px;top:788.32px;font-size:16.30px;letter-spacing:0.344px;color:#ececec;">0,32</div>
<div class="t" style="left:1538.56px;top:788.32px;font-size:16.30px;letter-spacing:0.344px;color:#ececec;">0,32</div>
<div class="t" style="left:1607.26px;top:788.32px;font-size:16.30px;letter-spacing:0.344px;color:#ececec;">0,32</div>
<div class="t" style="left:757.72px;top:815.57px;font-size:16.50px;transform:scaleX(1.0041);transform-origin:0 0;font-weight:bold;color:#f4f4f4;">Y</div>
<div class="t" style="left:910.66px;top:815.74px;font-size:16.30px;letter-spacing:0.309px;color:#ececec;">0,33</div>
<div class="t" style="left:988.58px;top:815.74px;font-size:16.30px;letter-spacing:0.301px;color:#ececec;">3,48</div>
<div class="t" style="left:1056.76px;top:815.74px;font-size:16.30px;letter-spacing:0.417px;color:#ececec;">14,66</div>
<div class="t" style="left:1126.08px;top:815.74px;font-size:16.30px;letter-spacing:0.281px;color:#ececec;">34,71</div>
<div class="t" style="left:1194.67px;top:815.74px;font-size:16.30px;letter-spacing:0.311px;color:#ececec;">64,98</div>
<div class="t" style="left:1262.96px;top:815.74px;font-size:16.30px;letter-spacing:0.312px;color:#ececec;">106,64</div>
<div class="t" style="left:1331.76px;top:815.74px;font-size:16.30px;letter-spacing:0.344px;color:#ececec;">157,40</div>
<div class="t" style="left:1400.88px;top:815.74px;font-size:16.30px;letter-spacing:0.276px;color:#ececec;">219,83</div>
<div class="t" style="left:1469.58px;top:815.74px;font-size:16.30px;letter-spacing:0.276px;color:#ececec;">296,56</div>
<div class="t" style="left:1538.58px;top:815.74px;font-size:16.30px;letter-spacing:0.252px;color:#ececec;">386,21</div>
<div class="t" style="left:1607.53px;top:815.74px;font-size:16.30px;letter-spacing:0.198px;color:#ececec;">490,29</div>
<div class="t" style="left:757.81px;top:842.99px;font-size:16.50px;transform:scaleX(1.0383);transform-origin:0 0;font-weight:bold;color:#f4f4f4;">Target Y</div>
<div class="t" style="left:910.66px;top:843.16px;font-size:16.30px;letter-spacing:0.283px;color:#ececec;">0,00</div>
<div class="t" style="left:988.55px;top:843.16px;font-size:16.30px;letter-spacing:0.314px;color:#ececec;">5,06</div>
<div class="t" style="left:1056.76px;top:843.16px;font-size:16.30px;letter-spacing:0.417px;color:#ececec;">16,23</div>
<div class="t" style="left:1126.08px;top:843.16px;font-size:16.30px;letter-spacing:0.261px;color:#ececec;">35,43</div>
<div class="t" style="left:1194.67px;top:843.16px;font-size:16.30px;letter-spacing:0.253px;color:#ececec;">65,14</div>
<div class="t" style="left:1262.96px;top:843.16px;font-size:16.30px;letter-spacing:0.312px;color:#ececec;">105,84</div>
<div class="t" style="left:1331.76px;top:843.16px;font-size:16.30px;letter-spacing:0.359px;color:#ececec;">156,18</div>
<div class="t" style="left:1400.88px;top:843.16px;font-size:16.30px;letter-spacing:0.274px;color:#ececec;">218,28</div>
<div class="t" style="left:1469.58px;top:843.16px;font-size:16.30px;letter-spacing:0.269px;color:#ececec;">296,05</div>
<div class="t" style="left:1538.58px;top:843.16px;font-size:16.30px;letter-spacing:0.257px;color:#ececec;">387,97</div>
<div class="t" style="left:1607.53px;top:843.16px;font-size:16.30px;letter-spacing:0.198px;color:#ececec;">490,29</div>
<div class="t" style="left:757.29px;top:870.41px;font-size:16.50px;transform:scaleX(1.0546);transform-origin:0 0;font-weight:bold;color:#f4f4f4;">Gamma Log/Log</div>
<div class="t" style="left:910.06px;top:870.58px;font-size:16.30px;letter-spacing:0.508px;color:#ececec;">1,28</div>
<div class="t" style="left:988.38px;top:870.58px;font-size:16.30px;letter-spacing:0.405px;color:#ececec;">2,17</div>
<div class="t" style="left:1057.18px;top:870.58px;font-size:16.30px;letter-spacing:0.367px;color:#ececec;">2,18</div>
<div class="t" style="left:1125.88px;top:870.58px;font-size:16.30px;letter-spacing:0.389px;color:#ececec;">2,19</div>
<div class="t" style="left:1194.68px;top:870.58px;font-size:16.30px;letter-spacing:0.397px;color:#ececec;">2,21</div>
<div class="t" style="left:1263.38px;top:870.58px;font-size:16.30px;letter-spacing:0.397px;color:#ececec;">2,21</div>
<div class="t" style="left:1332.18px;top:870.58px;font-size:16.30px;letter-spacing:0.405px;color:#ececec;">2,22</div>
<div class="t" style="left:1400.88px;top:870.58px;font-size:16.30px;letter-spacing:0.370px;color:#ececec;">2,23</div>
<div class="t" style="left:1469.58px;top:870.58px;font-size:16.30px;letter-spacing:0.359px;color:#ececec;">2,25</div>
<div class="t" style="left:1538.38px;top:870.58px;font-size:16.30px;letter-spacing:0.397px;color:#ececec;">2,31</div>
<div class="t" style="left:1607.08px;top:870.58px;font-size:16.30px;letter-spacing:0.405px;color:#ececec;">2,27</div>
<div class="t" style="left:757.36px;top:897.83px;font-size:16.50px;transform:scaleX(0.9408);transform-origin:0 0;font-weight:bold;color:#f4f4f4;">CCT</div>
<div class="t" style="left:910.06px;top:898.00px;font-size:16.30px;letter-spacing:0.284px;color:#ececec;">19081,00</div>
<div class="t" style="left:988.36px;top:898.00px;font-size:16.30px;letter-spacing:0.242px;color:#ececec;">7793,00</div>
<div class="t" style="left:1057.16px;top:898.00px;font-size:16.30px;letter-spacing:0.242px;color:#ececec;">7395,00</div>
<div class="t" style="left:1125.86px;top:898.00px;font-size:16.30px;letter-spacing:0.242px;color:#ececec;">7345,00</div>
<div class="t" style="left:1194.66px;top:898.00px;font-size:16.30px;letter-spacing:0.242px;color:#ececec;">7321,00</div>
<div class="t" style="left:1263.36px;top:898.00px;font-size:16.30px;letter-spacing:0.242px;color:#ececec;">7308,00</div>
<div class="t" style="left:1332.16px;top:898.00px;font-size:16.30px;letter-spacing:0.242px;color:#ececec;">7300,00</div>
<div class="t" style="left:1400.86px;top:898.00px;font-size:16.30px;letter-spacing:0.242px;color:#ececec;">7300,00</div>
<div class="t" style="left:1469.56px;top:898.00px;font-size:16.30px;letter-spacing:0.242px;color:#ececec;">7306,00</div>
<div class="t" style="left:1538.36px;top:898.00px;font-size:16.30px;letter-spacing:0.242px;color:#ececec;">7328,00</div>
<div class="t" style="left:1607.06px;top:898.00px;font-size:16.30px;letter-spacing:0.242px;color:#ececec;">7413,00</div>
<div class="t" style="left:757.30px;top:925.25px;font-size:16.50px;transform:scaleX(1.0508);transform-origin:0 0;font-weight:bold;color:#f4f4f4;">ΔE 2000</div>
<div class="t" style="left:910.66px;top:925.42px;font-size:16.30px;letter-spacing:0.283px;color:#ececec;">0,90</div>
<div class="t" style="left:988.38px;top:925.42px;font-size:16.30px;letter-spacing:0.370px;color:#ececec;">2,36</div>
<div class="t" style="left:1057.18px;top:925.42px;font-size:16.30px;letter-spacing:0.389px;color:#ececec;">2,39</div>
<div class="t" style="left:1125.88px;top:925.42px;font-size:16.30px;letter-spacing:0.291px;color:#ececec;">2,94</div>
<div class="t" style="left:1194.88px;top:925.42px;font-size:16.30px;letter-spacing:0.293px;color:#ececec;">3,55</div>
<div class="t" style="left:1263.83px;top:925.42px;font-size:16.30px;letter-spacing:0.240px;color:#ececec;">4,09</div>
<div class="t" style="left:1332.63px;top:925.42px;font-size:16.30px;letter-spacing:0.240px;color:#ececec;">4,49</div>
<div class="t" style="left:1401.33px;top:925.42px;font-size:16.30px;letter-spacing:0.256px;color:#ececec;">4,87</div>
<div class="t" style="left:1469.75px;top:925.42px;font-size:16.30px;letter-spacing:0.235px;color:#ececec;">5,24</div>
<div class="t" style="left:1538.55px;top:925.42px;font-size:16.30px;letter-spacing:0.314px;color:#ececec;">5,63</div>
<div class="t" style="left:1607.07px;top:925.42px;font-size:16.30px;letter-spacing:0.373px;color:#ececec;">6,26</div>
<div class="t" style="left:942.29px;top:732.15px;font-size:15.30px;color:#f4f4f4;">0</div>
<div class="t" style="left:1009.89px;top:732.15px;font-size:15.30px;letter-spacing:1.684px;color:#f4f4f4;">10</div>
<div class="t" style="left:1079.09px;top:732.15px;font-size:15.30px;letter-spacing:1.288px;color:#f4f4f4;">20</div>
<div class="t" style="left:1147.98px;top:732.15px;font-size:15.30px;letter-spacing:1.102px;color:#f4f4f4;">30</div>
<div class="t" style="left:1217.01px;top:732.15px;font-size:15.30px;letter-spacing:0.870px;color:#f4f4f4;">40</div>
<div class="t" style="left:1285.45px;top:732.15px;font-size:15.30px;letter-spacing:1.131px;color:#f4f4f4;">50</div>
<div class="t" style="left:1354.08px;top:732.15px;font-size:15.30px;letter-spacing:1.296px;color:#f4f4f4;">60</div>
<div class="t" style="left:1422.78px;top:732.15px;font-size:15.30px;letter-spacing:1.303px;color:#f4f4f4;">70</div>
<div class="t" style="left:1491.60px;top:732.15px;font-size:15.30px;letter-spacing:1.184px;color:#f4f4f4;">80</div>
<div class="t" style="left:1560.34px;top:732.15px;font-size:15.30px;letter-spacing:1.236px;color:#f4f4f4;">90</div>
<div class="t" style="left:1623.72px;top:732.15px;font-size:15.30px;letter-spacing:0.822px;color:#f4f4f4;">100</div>
<div class="t" style="left:67.89px;top:1024.02px;font-size:11.20px;font-weight:bold;color:#282828;">0</div>
<div class="t" style="left:205.89px;top:1024.02px;font-size:11.20px;letter-spacing:1.307px;font-weight:bold;color:#282828;">10</div>
<div class="t" style="left:348.11px;top:1024.02px;font-size:11.20px;letter-spacing:0.989px;font-weight:bold;color:#282828;">20</div>
<div class="t" style="left:490.14px;top:1024.02px;font-size:11.20px;letter-spacing:0.858px;font-weight:bold;color:#282828;">30</div>
<div class="t" style="left:632.13px;top:1024.02px;font-size:11.20px;letter-spacing:0.771px;font-weight:bold;color:#282828;">40</div>
<div class="t" style="left:773.86px;top:1024.02px;font-size:11.20px;letter-spacing:0.946px;font-weight:bold;color:#282828;">50</div>
<div class="t" style="left:915.69px;top:1024.02px;font-size:11.20px;letter-spacing:1.011px;font-weight:bold;color:#282828;">60</div>
<div class="t" style="left:1057.52px;top:1024.02px;font-size:11.20px;letter-spacing:1.082px;font-weight:bold;color:#282828;">70</div>
<div class="t" style="left:1199.54px;top:1024.02px;font-size:11.20px;letter-spacing:0.957px;font-weight:bold;color:#282828;">80</div>
<div class="t" style="left:1341.41px;top:1024.02px;font-size:11.20px;letter-spacing:0.989px;font-weight:bold;color:#282828;">90</div>
<div class="t" style="left:1479.84px;top:1024.02px;font-size:11.20px;letter-spacing:0.689px;font-weight:bold;color:#fff;">100</div>
<div class="t" style="left:1681.85px;top:1007.82px;font-size:26.20px;letter-spacing:0.155px;color:#3c3c3c;text-shadow:.5px 0 0 #3c3c3c,-.5px 0 0 #3c3c3c;">Back</div>
<div class="t" style="left:1803.05px;top:1007.82px;font-size:26.20px;letter-spacing:1.956px;color:#3c3c3c;text-shadow:.5px 0 0 #3c3c3c,-.5px 0 0 #3c3c3c;">Next</div>
</div>
</body></html>
